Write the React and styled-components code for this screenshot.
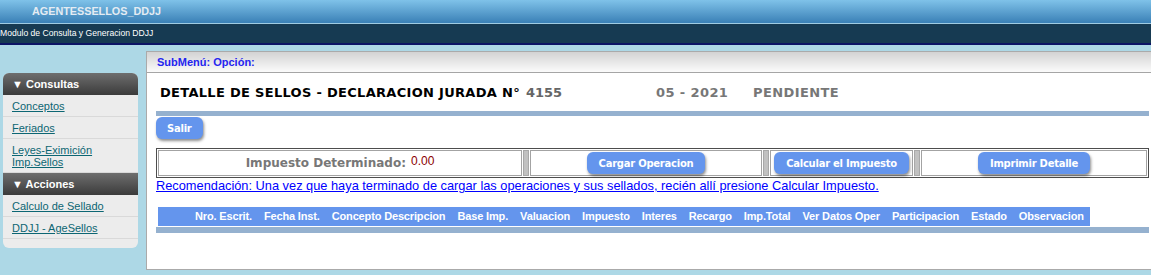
import styled, { createGlobalStyle } from "styled-components";

const GlobalStyle = createGlobalStyle`
  body {
    margin: 0;
    background: #add8e6;
    font-family: "Liberation Sans", Arial, sans-serif;
    overflow: hidden;
  }
`;

const Page = styled.div`
  width: 1151px;
  height: 275px;
  overflow: hidden;
`;

/* cabecera */
const TopBar = styled.div`
  height: 23px;
  padding-left: 32px;
  background: linear-gradient(#7fc2e9, #3a80b6);
  color: #e4ecf3;
  font-size: 10.8px;
  font-weight: bold;
  line-height: 23px;
`;
const SubBar = styled.div`
  height: 19px;
  border-top: 1px solid #9fcbe2;
  border-bottom: 2px solid #0c1466;
  background: #163a52;
  color: #ffffff;
  font-size: 8.6px;
  line-height: 19px;
`;

const Content = styled.div`
  display: flex;
  align-items: flex-start;
  gap: 8px;
  padding: 6px 0 0 3px;
`;

/* menu lateral */
const Sidebar = styled.div`
  width: 135px;
  flex-shrink: 0;
  margin-top: 22px;
  background: #ececec;
  border-radius: 6px;
  overflow: hidden;
  padding-bottom: 9px;
`;
const MenuHeader = styled.div`
  height: 22px;
  padding-left: 9px;
  background: linear-gradient(#6e6e6e, #3b3b3b);
  color: #fff;
  font-size: 11px;
  font-weight: bold;
  line-height: 22px;
`;
const MenuItem = styled.div`
  padding: 5px 9px 4px;
  border-bottom: 1px solid #d9d9d9;
  font-size: 11px;
  line-height: 12px;
  & a {
    color: #0c6673;
    text-decoration: underline;
  }
`;

/* panel principal */
const Panel = styled.div`
  width: 1013px;
  height: 217px;
  flex-shrink: 0;
  background: #fff;
  border: 1px solid #aaaaaa;
`;
const SubMenu = styled.div`
  height: 20px;
  padding-left: 10px;
  background: linear-gradient(#d3d3d3, #fbfbfb);
  border-bottom: 1px solid #a5a5a5;
  color: #2424f0;
  font-size: 11px;
  font-weight: bold;
  line-height: 20px;
`;
const Body = styled.div`
  padding: 0 9px;
  width: 993px;
`;
const TitleRow = styled.div`
  display: grid;
  grid-template-columns: 496px 97px auto;
  align-items: center;
  height: 38px;
  padding-left: 4px;
  font-family: Verdana, "DejaVu Sans", sans-serif;
  font-size: 13px;
  font-weight: bold;
`;
const Title = styled.span`
  color: #000;
  letter-spacing: 0.3px;
`;
const Muted = styled.span`
  color: ${({ $dark }) => ($dark ? "#666" : "#777")};
  margin-left: ${({ $gap }) => $gap || 0}px;
  letter-spacing: ${({ $dark }) => ($dark ? 0 : 0.4)}px;
`;
const Rule = styled.div`
  height: ${({ $h }) => $h}px;
  background: #95b1cf;
`;
const Button = styled.button`
  height: 22px;
  padding: 0 ${({ $pad }) => $pad || 12}px;
  border: 0;
  border-radius: 6px;
  background: #6495ed;
  color: #fff;
  font-family: Verdana, "DejaVu Sans", sans-serif;
  font-size: 10px;
  font-weight: bold;
  letter-spacing: -0.25px;
  white-space: nowrap;
  box-shadow: 1px 2px 3px rgba(0, 0, 0, 0.45);
  cursor: pointer;
`;
const SalirRow = styled.div`
  padding-top: 1px;
  height: 31px;
`;
const Box = styled.div`
  display: flex;
  gap: 1px;
  padding: 1px;
  height: 26px;
  border: 1px solid #4d4d4d;
`;
const Cell = styled.div`
  width: ${({ $w }) => ($w ? `${$w}px` : "auto")};
  flex: ${({ $w }) => ($w ? "none" : "1")};
  display: flex;
  align-items: center;
  justify-content: center;
  border: 1px solid #a3a3a3;
  box-sizing: border-box;
`;
const Sep = styled.div`
  width: 6px;
  background: #c1c1c1;
  border: 1px solid #a8a8a8;
  box-sizing: border-box;
`;
const Amount = styled.span`
  font-family: Verdana, "DejaVu Sans", sans-serif;
  font-size: 12px;
  font-weight: bold;
  color: #777;
  & b {
    font-family: "Liberation Sans", Arial, sans-serif;
    font-weight: normal;
    color: #8b0000;
    margin-left: 5px;
    position: relative;
    top: -2px;
  }
`;
const Hint = styled.a`
  display: block;
  height: 16px;
  color: #0000ff;
  font-size: 12.8px;
  line-height: 16px;
  text-decoration: underline;
`;
const HeadRow = styled.div`
  display: flex;
  margin: 13px 0 0 2px;
  width: max-content;
  border-bottom: 1px solid #fff;
  background: #6495ed;
`;
const Th = styled.div`
  padding: 0 6px;
  width: ${({ $w }) => ($w ? `${$w}px` : "auto")};
  color: #fff;
  font-size: 11px;
  font-weight: bold;
  letter-spacing: -0.15px;
  line-height: 19px;
  white-space: nowrap;
`;

const columns = [
  "Nro. Escrit.",
  "Fecha Inst.",
  "Concepto Descripcion",
  "Base Imp.",
  "Valuacion",
  "Impuesto",
  "Interes",
  "Recargo",
  "Imp.Total",
  "Ver Datos Oper",
  "Participacion",
  "Estado",
  "Observacion",
];

export default function App() {
  return (
    <Page>
      <GlobalStyle />
      <TopBar>AGENTESSELLOS_DDJJ</TopBar>
      <SubBar>Modulo de Consulta y Generacion DDJJ</SubBar>
      <Content>
        <Sidebar>
          <MenuHeader>▼ Consultas</MenuHeader>
          <MenuItem><a href="#">Conceptos</a></MenuItem>
          <MenuItem><a href="#">Feriados</a></MenuItem>
          <MenuItem><a href="#">Leyes-Eximición Imp.Sellos</a></MenuItem>
          <MenuHeader>▼ Acciones</MenuHeader>
          <MenuItem><a href="#">Calculo de Sellado</a></MenuItem>
          <MenuItem><a href="#">DDJJ - AgeSellos</a></MenuItem>
        </Sidebar>
        <Panel>
          <SubMenu>SubMenú: Opción:</SubMenu>
          <Body>
            <TitleRow>
              <span>
                <Title>DETALLE DE SELLOS - DECLARACION JURADA N°</Title>
                <Muted $dark $gap={6}>4155</Muted>
              </span>
              <Muted>05 - 2021</Muted>
              <Muted>PENDIENTE</Muted>
            </TitleRow>
            <Rule $h={5} />
            <SalirRow>
              <Button $pad={11}>Salir</Button>
            </SalirRow>
            <Box>
              <Cell $w={364}>
                <Amount>
                  Impuesto Determinado:<b>0.00</b>
                </Amount>
              </Cell>
              <Sep />
              <Cell $w={232}>
                <Button>Cargar Operacion</Button>
              </Cell>
              <Sep />
              <Cell $w={143}>
                <Button>Calcular el Impuesto</Button>
              </Cell>
              <Sep />
              <Cell>
                <Button>Imprimir Detalle</Button>
              </Cell>
            </Box>
            <Hint href="#">
              Recomendación: Una vez que haya terminado de cargar las operaciones y sus sellados, recién allí presione Calcular Impuesto.
            </Hint>
            <HeadRow>
              <Th $w={19} />
              {columns.map((c) => (
                <Th key={c}>{c}</Th>
              ))}
            </HeadRow>
            <Rule $h={6} />
          </Body>
        </Panel>
      </Content>
    </Page>
  );
}
